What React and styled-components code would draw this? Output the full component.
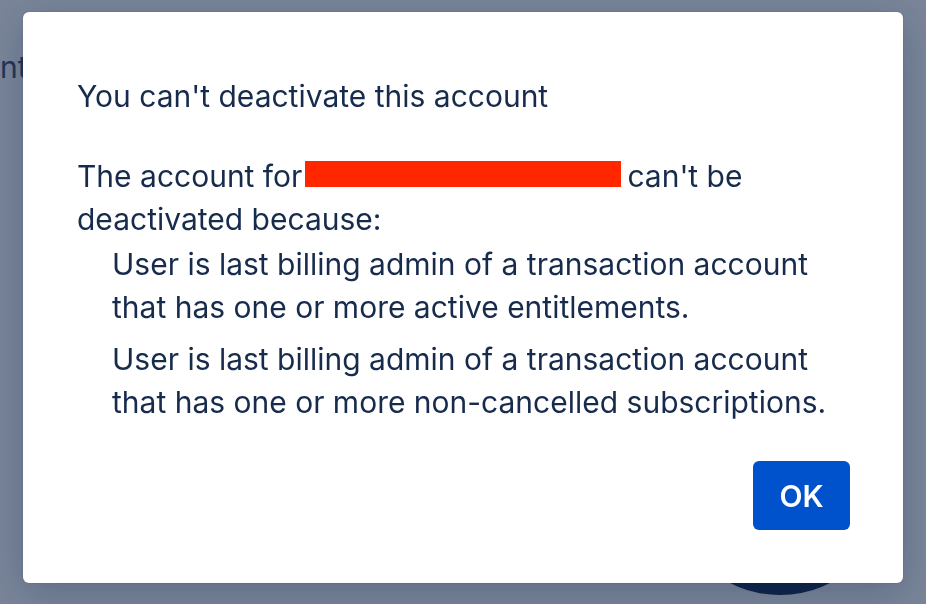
import styled, { createGlobalStyle } from "styled-components"

const GlobalStyle = createGlobalStyle`
  html, body {
    margin: 0;
    padding: 0;
    width: 926px;
    height: 604px;
    overflow: hidden;
    background: #ffffff;
    font-family: Inter, "Noto Sans", "Liberation Sans", sans-serif;
  }
`

const Page = styled.div`
  position: relative;
  width: 926px;
  height: 604px;
  background: #ffffff;
`

const PageHeading = styled.div`
  padding: 50px 0 0 0;
  font-size: 30px;
  color: #42526e;
  line-height: 34px;
`

const Avatar = styled.div`
  position: absolute;
  left: 670px;
  top: 375px;
  width: 220px;
  height: 220px;
  border-radius: 50%;
  background: #172b4d;
`

const Blanket = styled.div`
  position: fixed;
  inset: 0;
  background: rgba(9, 30, 66, 0.54);
  display: flex;
  justify-content: center;
  align-items: flex-start;
  padding-top: 12px;
`

const Dialog = styled.div`
  width: 880px;
  height: 571px;
  box-sizing: border-box;
  background: #ffffff;
  border-radius: 6px;
  box-shadow: 0 10px 40px rgba(9, 30, 66, 0.25), 0 0 2px rgba(9, 30, 66, 0.2);
  padding: 63px 53px 53px 54px;
  display: flex;
  flex-direction: column;
  color: #172b4d;
`

const Title = styled.h1`
  margin: 0 0 37px 0;
  font-size: 30px;
  font-weight: 400;
  line-height: 43px;
`

const Body = styled.div`
  font-size: 30px;
  line-height: 43px;
  flex: 1;
`

const Text = styled.p`
  margin: 0;
`

const Redacted = styled.span`
  display: inline-block;
  width: 316px;
  height: 26px;
  background: #ff2600;
  vertical-align: 0;
  margin: 0 6px 0 3px;
`

const Reasons = styled.ul`
  list-style: none;
  margin: 2px 0 0 0;
  padding: 0 0 0 35px;
`

const Reason = styled.li`
  margin: 0 0 9px 0;
  max-width: 735px;
`

const Footer = styled.div`
  display: flex;
  justify-content: flex-end;
`

const Button = styled.button`
  width: 97px;
  height: 69px;
  border: none;
  border-radius: 6px;
  background: #0052cc;
  color: #ffffff;
  font-family: inherit;
  font-size: 30px;
  font-weight: 600;
  cursor: pointer;
`

export default function App() {
  return (
    <>
      <GlobalStyle />
      <Page>
        <PageHeading>nt</PageHeading>
        <Avatar />
      </Page>
      <Blanket>
        <Dialog>
          <Title>You can't deactivate this account</Title>
          <Body>
            <Text>
              The account for<Redacted />can't be deactivated because:
            </Text>
            <Reasons>
              <Reason>User is last billing admin of a transaction account that has one or more active entitlements.</Reason>
              <Reason>User is last billing admin of a transaction account that has one or more non-cancelled subscriptions.</Reason>
            </Reasons>
          </Body>
          <Footer>
            <Button>OK</Button>
          </Footer>
        </Dialog>
      </Blanket>
    </>
  )
}
